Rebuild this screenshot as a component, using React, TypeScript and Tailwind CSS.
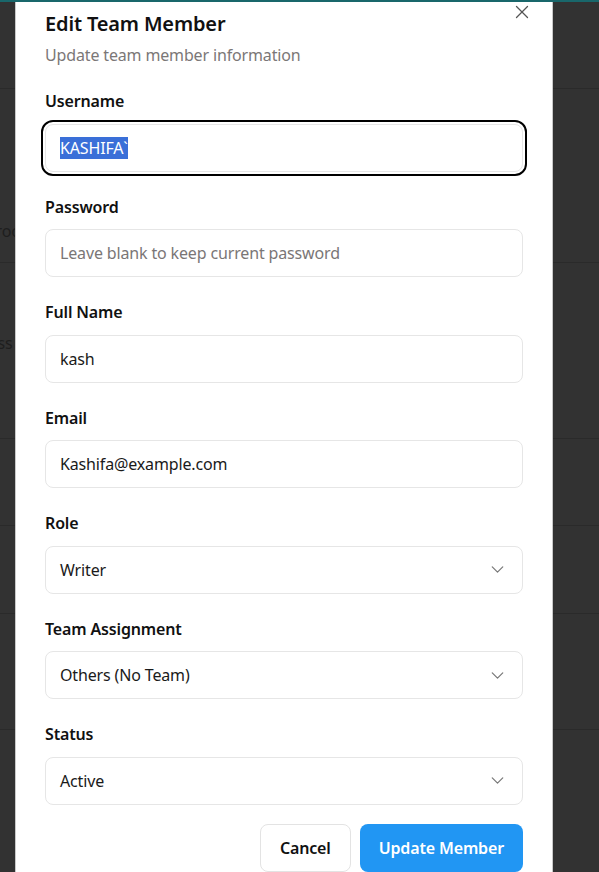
import React from 'react';
import { ChevronDown, X } from 'lucide-react';

const Field = ({ label, children }: { label: string; children: React.ReactNode }) => (
  <div className="flex flex-col">
    <label className="h-6 leading-6 text-base font-semibold text-[#111] mb-[10.5px]">{label}</label>
    {children}
  </div>
);

const TextInput = ({ value, placeholder }: { value?: string; placeholder?: string }) => (
  <div className="h-12 rounded-lg border border-[#e6e6e6] bg-white flex items-center pl-[14px] text-base">
    {value ? <span className="text-[#1a1a1a]">{value}</span> : <span className="text-[#7a7676]">{placeholder}</span>}
  </div>
);

const SelectBox = ({ value }: { value: string }) => (
  <div className="h-12 rounded-lg border border-[#e6e6e6] bg-white flex items-center justify-between pl-[14px] pr-[14px] text-base text-[#1a1a1a]">
    <span>{value}</span>
    <ChevronDown size={21} strokeWidth={1.4} className="text-[#777]" />
  </div>
);

export default function App() {
  const rows = [88, 262, 438, 525, 613, 729];
  return (
    <div className="relative h-[872px] w-[599px] overflow-hidden bg-[#323232] tracking-[-0.15px]" style={{ fontFamily: '"Noto Sans", "Open Sans", sans-serif' }}>
      {/* dimmed page behind the dialog */}
      {rows.map((y) => (
        <div key={y} className="absolute left-0 right-0 h-px bg-[#2a2a2a]" style={{ top: y }} />
      ))}
      <span className="absolute left-[-14px] top-[219px] text-base text-[#1e1e1e]">Proo</span>
      <span className="absolute left-[-12px] top-[331px] text-base text-[#1e1e1e]">oss</span>

      <div className="absolute left-[15px] top-0 bottom-0 w-[538px] bg-white border-x border-[#c9c9c9] px-[29px] pt-[10px]">
        <button className="absolute right-[19px] top-[1px] text-[#555]">
          <X size={22} strokeWidth={1.4} />
        </button>
        <h2 className="text-xl leading-7 font-semibold text-[#111]">Edit Team Member</h2>
        <p className="mt-[5px] text-base leading-6 text-[#7b7777]">Update team member information</p>

        <div className="mt-[22px] flex flex-col gap-[23px]">
          <Field label="Username">
            <div className="h-12 rounded-lg border border-[#e6e6e6] bg-white flex items-center pl-[14px] text-base outline-2 outline-black outline-offset-2">
              <span className="bg-[#3a6fd8] text-white leading-[22px]">KASHIFA`</span>
            </div>
          </Field>
          <Field label="Password">
            <TextInput placeholder="Leave blank to keep current password" />
          </Field>
          <Field label="Full Name">
            <TextInput value="kash" />
          </Field>
          <Field label="Email">
            <TextInput value="Kashifa@example.com" />
          </Field>
          <Field label="Role">
            <SelectBox value="Writer" />
          </Field>
          <Field label="Team Assignment">
            <SelectBox value="Others (No Team)" />
          </Field>
          <Field label="Status">
            <SelectBox value="Active" />
          </Field>
        </div>

        <div className="mt-[19px] flex justify-end gap-[9px]">
          <button className="h-12 px-[19px] rounded-lg border border-[#e3e3e3] bg-white text-base font-semibold text-[#111]">Cancel</button>
          <button className="h-12 px-[19px] rounded-lg bg-[#2196f3] text-base font-semibold text-white">Update Member</button>
        </div>
      </div>

      <div className="absolute left-0 right-0 top-0 h-[2px] bg-[#19676b]" />
    </div>
  );
}
